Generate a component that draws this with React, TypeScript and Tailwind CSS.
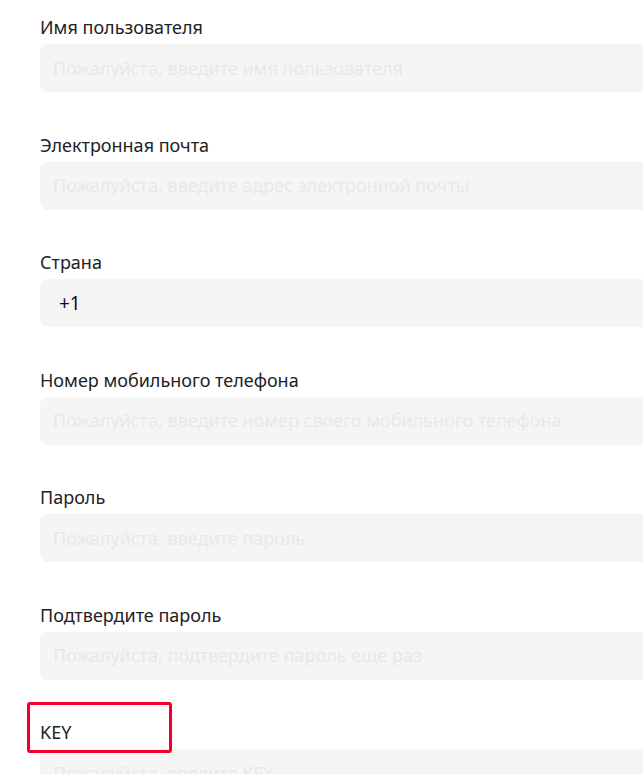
import React from 'react';

const fields = [
  { label: 'Имя пользователя', placeholder: 'Пожалуйста, введите имя пользователя' },
  { label: 'Электронная почта', placeholder: 'Пожалуйста, введите адрес электронной почты' },
  { label: 'Страна', value: '+1' },
  { label: 'Номер мобильного телефона', placeholder: 'Пожалуйста, введите номер своего мобильного телефона' },
  { label: 'Пароль', placeholder: 'Пожалуйста, введите пароль' },
  { label: 'Подтвердите пароль', placeholder: 'Пожалуйста, подтвердите пароль еще раз' },
  { label: 'KEY', placeholder: 'Пожалуйста, введите KEY', marked: true },
];

export default function App() {
  return (
    <div
      className="w-[643px] h-[774px] overflow-hidden bg-white pl-[40px] pt-[15px]"
      style={{ fontFamily: '"Noto Sans", "Open Sans", sans-serif' }}
    >
      <div className="flex flex-col gap-[40.5px]">
        {fields.map(f => (
          <div key={f.label} className="flex flex-col gap-[5px]">
            <div className="relative h-[24px] flex items-center">
              <span className="text-[18px] leading-[24px] text-[#222]">{f.label}</span>
              {f.marked && (
                <div className="absolute left-[-13px] top-[-18px] w-[145px] h-[51px] border-[3px] border-[#f0002a] rounded-[3px]" />
              )}
            </div>
            <div className="w-[640px] h-[48px] rounded-lg bg-[#f5f5f5] flex items-center">
              {f.value ? (
                <span className="pl-[19px] text-[19px] text-[#111]">{f.value}</span>
              ) : (
                <span className="pl-[13px] text-[18px] text-[#e8e8e8] whitespace-nowrap">{f.placeholder}</span>
              )}
            </div>
          </div>
        ))}
      </div>
    </div>
  );
}
